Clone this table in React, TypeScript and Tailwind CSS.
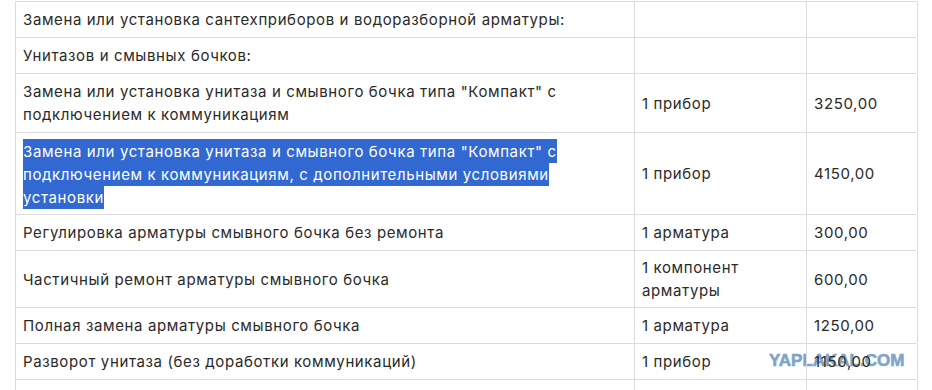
import React from 'react';

type Row = { name: React.ReactNode; unit?: React.ReactNode; price?: string; h: string };

const font = { fontFamily: 'Inter, "Noto Sans", sans-serif' };

const Sel: React.FC<{ children: React.ReactNode }> = ({ children }) => (
  <span className="bg-[#3168d2] text-white py-[2.5px] [box-decoration-break:clone]">{children}</span>
);

const rows: Row[] = [
  { name: 'Замена или установка сантехприборов и водоразборной арматуры:', h: 'h-[36px]' },
  { name: 'Унитазов и смывных бочков:', h: 'h-[36px]' },
  {
    name: 'Замена или установка унитаза и смывного бочка типа "Компакт" с подключением к коммуникациям',
    unit: '1 прибор',
    price: '3250,00',
    h: 'h-[59px]',
  },
  {
    name: (
      <Sel>
        Замена или установка унитаза и смывного бочка типа "Компакт" с подключением к коммуникациям, с дополнительными условиями установки
      </Sel>
    ),
    unit: '1 прибор',
    price: '4150,00',
    h: 'h-[82px]',
  },
  { name: 'Регулировка арматуры смывного бочка без ремонта', unit: '1 арматура', price: '300,00', h: 'h-[36px]' },
  {
    name: 'Частичный ремонт арматуры смывного бочка',
    unit: (
      <>
        1 компонент
        <br />
        арматуры
      </>
    ),
    price: '600,00',
    h: 'h-[57px]',
  },
  { name: 'Полная замена арматуры смывного бочка', unit: '1 арматура', price: '1250,00', h: 'h-[36px]' },
  { name: 'Разворот унитаза (без доработки коммуникаций)', unit: '1 прибор', price: '1150,00', h: 'h-[36px]' },
  { name: '', h: 'h-[36px]' },
];

export default function App() {
  return (
    <div className="relative w-[932px] h-[390px] overflow-hidden bg-white text-[15px] leading-[23px] tracking-[0.62px] text-[#2a2a2a]" style={font}>
      {/* watermark sits under the table text */}
      <div
        className="absolute left-[769px] top-[352px] text-[17px] leading-[17px] font-bold tracking-normal text-[#7fa4c8] [-webkit-text-stroke:0.6px_#7fa4c8]"
        style={{ fontFamily: '"Liberation Sans", Arial, sans-serif' }}
      >
        YAPLAKAL.COM
      </div>
      <div className="relative ml-[15px] mt-px w-[902px] border-t border-l border-[#dcdcdc]">
        {rows.map((r, i) => (
          <div key={i} className={`grid grid-cols-[619px_172px_111px] ${r.h} border-b border-[#dcdcdc]`}>
            <div className="flex items-center px-[7px] border-r border-[#dcdcdc]">
              <div className="w-[575px]">{r.name}</div>
            </div>
            <div className="flex items-center px-[7px] border-r border-[#dcdcdc]">
              <div>{r.unit}</div>
            </div>
            <div className="flex items-center px-[7px] border-r border-[#dcdcdc]">{r.price}</div>
          </div>
        ))}
      </div>
    </div>
  );
}
